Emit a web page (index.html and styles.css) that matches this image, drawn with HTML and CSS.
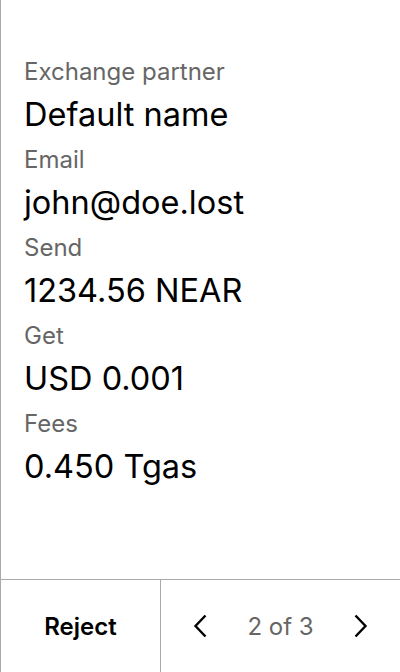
FILE: index.html
```html
<!DOCTYPE html>
<html>
<head>
<meta charset="utf-8">
<link rel="stylesheet" href="styles.css">
</head>
<body>
<div class="screen">
  <div class="content">
    <div class="field">
      <div class="label">Exchange partner</div>
      <div class="value">Default name</div>
    </div>
    <div class="field">
      <div class="label">Email</div>
      <div class="value">john@doe.lost</div>
    </div>
    <div class="field">
      <div class="label">Send</div>
      <div class="value">1234.56 NEAR</div>
    </div>
    <div class="field">
      <div class="label">Get</div>
      <div class="value">USD 0.001</div>
    </div>
    <div class="field">
      <div class="label">Fees</div>
      <div class="value">0.450 Tgas</div>
    </div>
  </div>
  <div class="footer">
    <div class="reject">Reject</div>
    <div class="pager">
      <svg class="chev" width="16" height="26" viewBox="0 0 16 26"><path d="M13.5 2.5 L3.5 13 L13.5 23.5" fill="none" stroke="#000" stroke-width="2.4"/></svg>
      <span class="count">2 of 3</span>
      <svg class="chev" width="16" height="26" viewBox="0 0 16 26"><path d="M2.5 2.5 L12.5 13 L2.5 23.5" fill="none" stroke="#000" stroke-width="2.4"/></svg>
    </div>
  </div>
</div>
</body>
</html>
```
FILE: styles.css
```css
html, body { margin: 0; padding: 0; background: #fff; }
.screen {
  width: 400px; height: 672px; box-sizing: border-box;
  border-left: 1px solid #aaa;
  display: flex; flex-direction: column;
  font-family: Inter, "Noto Sans", sans-serif;
}
.content { flex: 1; padding: 58px 0 0 23px; display: flex; flex-direction: column; }
.field { display: flex; flex-direction: column; height: 88px; }
.label { font-size: 24px; line-height: 28px; color: #666; }
.value { font-size: 32.5px; line-height: 58px; color: #000; height: 60px; }
.footer {
  height: 92px; border-top: 1px solid #aaa; display: flex;
}
.reject {
  width: 159px; border-right: 1px solid #aaa; display: flex; align-items: center; justify-content: center;
  font-size: 24px; font-weight: 600; color: #000;
}
.pager { flex: 1; display: flex; align-items: center; justify-content: space-between; padding: 0 31px 0 31px; }
.count { font-size: 24px; color: #666; }
.chev { display: block; }
```
